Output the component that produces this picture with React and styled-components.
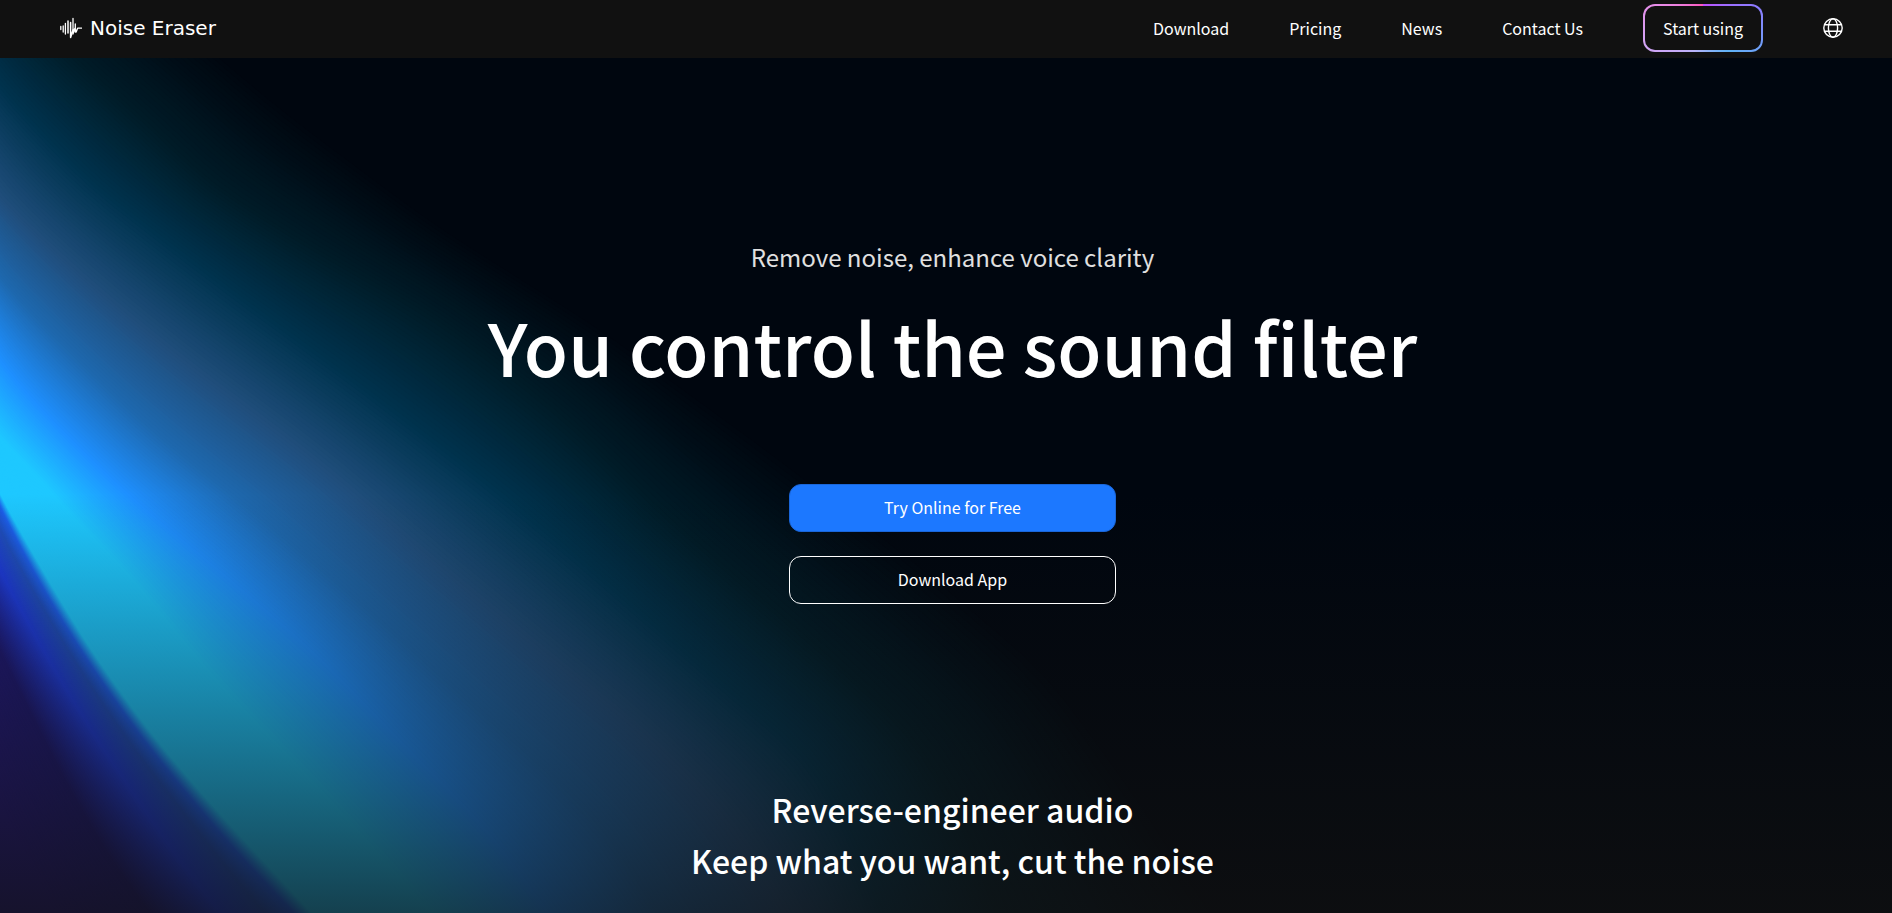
import React from "react";
import styled, {createGlobalStyle} from "styled-components";


const GlobalStyle = createGlobalStyle`
  * {
    box-sizing: border-box;
  }

  body {
    margin: 0;
    background-color: #111;
    color: white;
    font-family: "Noto Sans CJK KR", "Noto Sans", sans-serif;
  }
`;

const Page = styled.div`
  min-height: 100vh;
  display: flex;
  flex-direction: column;
`;

const Header = styled.header`
  height: 58px;
  padding: 0 49px 2px 60px;
  display: flex;
  align-items: center;
  justify-content: space-between;
  background-color: #111;
`;

const Logo = styled.a`
  display: flex;
  align-items: center;
  gap: 8px;
  color: white;
  font-family: "DejaVu Sans", sans-serif;
  font-size: 20px;
  line-height: 24px;
  text-decoration: none;
`;

const Nav = styled.nav`
  display: flex;
  align-items: center;
  gap: 60px;
`;

const NavLink = styled.a`
  color: white;
  font-size: 16px;
  line-height: 24px;
  text-decoration: none;
`;

const StartLink = styled(NavLink)`
  height: 48px;
  padding: 0 18px;
  display: flex;
  align-items: center;
  border: 2px solid transparent;
  border-radius: 12px;
  background:
    linear-gradient(#111, #111) padding-box,
    conic-gradient(#c44bff, #8c7dff 70deg, #5fb2f5 130deg, #b9b4fa 200deg, #d5a2f5 260deg, #e98ae6 300deg, #ff55bb) border-box;
`;

const LangButton = styled.button`
  padding: 0;
  display: flex;
  border: none;
  background: none;
  color: white;
  cursor: pointer;
`;

const Hero = styled.main`
  position: relative;
  flex: 1;
  padding: 175px 0 27px 13px;
  display: flex;
  flex-direction: column;
  align-items: center;
  text-align: center;
  background-color: #00060f;
  overflow: hidden;
`;

const Backdrop = styled.svg`
  position: absolute;
  top: 0;
  left: 0;
  width: 100%;
  height: 100%;
`;

const Shade = styled.div`
  position: absolute;
  inset: 0;
  background: linear-gradient(rgba(17, 17, 17, 0) 51%, rgba(17, 17, 17, 0.74) 100%);
`;

const Content = styled.div`
  position: relative;
  flex: 1;
  display: flex;
  flex-direction: column;
  align-items: center;
`;

const Subtitle = styled.p`
  margin: 0;
  color: #e0e0e0;
  font-size: 24px;
  line-height: 48px;
`;

const Title = styled.h1`
  margin: 12px 0 85px;
  font-size: 72px;
  font-weight: 500;
  line-height: 106px;
`;

const Actions = styled.div`
  display: flex;
  flex-direction: column;
  gap: 24px;
`;

const Button = styled.a`
  width: 327px;
  height: 48px;
  padding-bottom: 2px;
  display: flex;
  align-items: center;
  justify-content: center;
  border: 1px solid ${({$primary}) => ($primary ? "#1a66d9" : "white")};
  border-radius: 12px;
  background-color: ${({$primary}) => ($primary ? "#1c78ff" : "transparent")};
  color: white;
  font-size: 16px;
  line-height: 24px;
  text-decoration: none;
`;

const Slogan = styled.h2`
  margin: auto 0 0;
  font-size: 32px;
  font-weight: 500;
  line-height: 51px;
`;


// Light bands of the backdrop, from the outside in.
// Each one is a curve running from the top left to the bottom right.
const bands = [
    {color: [0, 6, 15], points: [[180, 20], [290, 112], [440, 225], [600, 325], [760, 440], [920, 560], [1050, 670], [1140, 790], [1220, 913]]},
    {color: [0, 28, 40], points: [[20, 5], [80, 63], [143, 117], [210, 183], [312, 247], [429, 313], [513, 375], [580, 430], [660, 510], [767, 603], [830, 657], [913, 733], [963, 817], [1000, 913]]},
    {color: [0, 51, 78], points: [[-60, 0], [0, 87], [89, 180], [223, 283], [379, 397], [487, 480], [580, 557], [663, 630], [720, 680], [813, 757], [857, 840], [883, 913]]},
    {color: [32, 78, 124], points: [[-70, 100], [0, 200], [89, 283], [179, 357], [312, 457], [424, 553], [536, 645], [633, 723], [687, 773], [740, 833], [787, 913]]},
    {color: [30, 104, 174], points: [[-60, 190], [0, 278], [67, 348], [150, 427], [268, 522], [368, 608], [478, 707], [555, 775], [610, 830], [660, 913]]},
    {color: [30, 144, 255], points: [[-60, 260], [0, 362], [45, 413], [125, 492], [232, 580], [320, 656], [408, 748], [486, 826], [550, 913]]},
    {color: [30, 200, 255], points: [[-60, 360], [0, 440], [45, 480], [67, 513], [116, 557], [170, 623], [223, 687], [304, 770], [350, 820], [424, 903]]},
    {color: [30, 200, 255], points: [[-40, 410], [0, 496], [47, 578], [91, 651], [149, 731], [208, 801], [264, 861], [312, 913]]},
    {color: [30, 96, 235], points: [[-40, 418], [0, 508], [40, 584], [84, 656], [140, 736], [197, 806], [249, 866], [294, 913]]},
    {color: [32, 79, 190], points: [[-40, 438], [0, 532], [31, 587], [74, 660], [127, 740], [179, 806], [225, 866], [266, 913]]},
    {color: [30, 60, 220], points: [[-40, 490], [0, 570], [49, 660], [100, 743], [147, 812], [185, 868], [222, 913]]},
    {color: [30, 24, 116], points: [[-40, 560], [0, 650], [40, 730], [80, 808], [120, 872], [156, 920]]},
    {color: [36, 24, 124], points: [[-40, 700], [0, 800], [40, 880], [60, 920]]},
];

const STEPS = 24;

// distance across the bands, measured at a place along them
const offsetAt = (points, along) => {
    let i = 1;
    while (i < points.length - 1 && points[i][0] + points[i][1] < along) i++;
    const [ax, ay] = points[i - 1];
    const [bx, by] = points[i];
    const t = (along - ax - ay) / (bx + by - ax - ay);
    return (ax - ay) + t * ((bx - by) - (ax - ay));
};

const places = Array.from({length: 60}, (_, i) => i * 40 - 120);

const smooth = (values) => values.map((v, i) => {
    const prev = values[Math.max(i - 1, 0)];
    const next = values[Math.min(i + 1, values.length - 1)];
    return (prev + 2 * v + next) / 4;
});

const curves = bands.map(({points}) => smooth(smooth(places.map((along) => offsetAt(points, along)))));

const layers = bands.slice(1).flatMap(({color}, i) =>
    Array.from({length: STEPS}, (_, n) => {
        const t = (n + 1) / STEPS;
        const line = places.map((along, k) => {
            const across = curves[i][k] + t * (curves[i + 1][k] - curves[i][k]);
            return `${((along + across) / 2).toFixed(1)},${((along - across) / 2).toFixed(1)}`;
        });
        const rgb = color.map((c, k) => Math.round(bands[i].color[k] + t * (c - bands[i].color[k])));
        return {
            d: `M-2000,-200 L${line.join(" L")} L-2000,3000 Z`,
            fill: `rgb(${rgb.join(",")})`,
        };
    })
);

const LogoMark = () => (
    <svg width="22" height="22" viewBox="0 0 22 22" fill="none" stroke="white" strokeLinecap="round" strokeLinejoin="round" aria-hidden="true">
        <path strokeWidth="1.3" d="M.8 9.5v3M3.2 9v6M5.4 6.5v10.5"/>
        <path strokeWidth="1.5" d="M8 4v12M10.6 5.5v15l2.6-8"/>
        <path strokeWidth="1.3" d="M13 1.5v15.5l2-6 1.2 4 1.4-3.8H22M15.3 7v8"/>
    </svg>
);

const Globe = () => (
    <svg width="20" height="20" viewBox="0 0 20 20" fill="none" stroke="currentColor" strokeWidth="1.4" aria-hidden="true">
        <circle cx="10" cy="10" r="9.2"/>
        <ellipse cx="10" cy="10" rx="4.6" ry="9.2"/>
        <path d="M1.5 6.7h17M1.5 13.3h17"/>
    </svg>
);

const App=()=>{
    return (
        <Page>
            <GlobalStyle/>
            <Header>
                <Logo href="#">
                    <LogoMark/>
                    Noise Eraser
                </Logo>
                <Nav>
                    <NavLink href="#download">Download</NavLink>
                    <NavLink href="#pricing">Pricing</NavLink>
                    <NavLink href="#news">News</NavLink>
                    <NavLink href="#contact">Contact Us</NavLink>
                    <StartLink href="#start">Start using</StartLink>
                    <LangButton type="button" aria-label="Language">
                        <Globe/>
                    </LangButton>
                </Nav>
            </Header>
            <Hero>
                <Backdrop viewBox="0 58 1892 855" preserveAspectRatio="xMinYMin slice" aria-hidden="true">
                    {layers.map(({d, fill}, i) => <path key={i} d={d} fill={fill}/>)}
                </Backdrop>
                <Shade/>
                <Content>
                    <Subtitle>Remove noise, enhance voice clarity</Subtitle>
                    <Title>You control the sound filter</Title>
                    <Actions>
                        <Button href="#online" $primary>Try Online for Free</Button>
                        <Button href="#app">Download App</Button>
                    </Actions>
                    <Slogan>
                        Reverse-engineer audio<br/>
                        Keep what you want, cut the noise
                    </Slogan>
                </Content>
            </Hero>
        </Page>
    );
}

export default App;
